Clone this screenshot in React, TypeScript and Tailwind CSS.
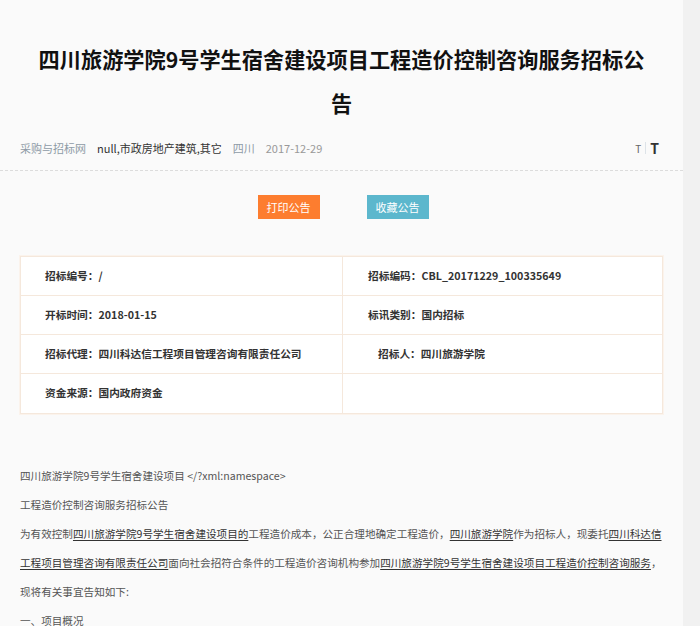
import React from 'react';

const FONT = { fontFamily: '"Microsoft YaHei", "Noto Sans CJK SC", "Noto Sans", sans-serif' };

const rows: [string, string, string, string, boolean?][] = [
  ['招标编号', '/', '招标编码', 'CBL_20171229_100335649'],
  ['开标时间', '2018-01-15', '标讯类别', '国内招标'],
  ['招标代理', '四川科达信工程项目管理咨询有限责任公司', '招标人', '四川旅游学院', true],
  ['资金来源', '国内政府资金', '', ''],
];

function U({ children }: { children: React.ReactNode }) {
  return <span className="underline underline-offset-2 text-[#333]">{children}</span>;
}

export default function App() {
  return (
    <div className="flex w-[700px] h-[626px] overflow-hidden bg-[#f1f1f1]" style={FONT}>
      <div className="w-[683px] shrink-0 bg-[#fafafa]">
        {/* Title */}
        <h1 className="pt-[37px] px-[30px] text-center text-[21.2px] leading-[44px] font-bold text-[#111]">
          四川旅游学院9号学生宿舍建设项目工程造价控制咨询服务招标公告
        </h1>

        {/* Meta */}
        <div className="mt-[13px] pb-[12px] border-b border-dashed border-[#dcdcdc]">
          <div className="flex items-center justify-between h-[20px] px-[20px] text-[11px]">
            <div className="flex items-center gap-[11px]">
              <span className="text-[#8e9aa6]">采购与招标网</span>
              <span className="text-[#333]">null,市政房地产建筑,其它</span>
              <span className="text-[#8e9aa6]">四川</span>
              <span className="text-[#999]">2017-12-29</span>
            </div>
            <div className="flex items-center gap-[4px] pr-[4px]">
              <span className="text-[10px] text-[#666]">T</span>
              <span className="w-px h-[12px] bg-[#dde3e8]" />
              <span className="text-[14px] font-bold text-[#333]">T</span>
            </div>
          </div>
        </div>

        {/* Buttons */}
        <div className="mt-[24px] flex justify-center gap-[47px] pl-[3px]">
          <button className="w-[62px] h-[24px] bg-[#fd7d2f] text-white text-[11px]">打印公告</button>
          <button className="w-[62px] h-[24px] bg-[#5cb7cd] text-white text-[11px]">收藏公告</button>
        </div>

        {/* Info table */}
        <div className="mt-[37px] mx-[20px] bg-white border border-[#f5e8dc] shadow-[0_0_0_1px_#fbf3ec]">
          {rows.map(([k1, v1, k2, v2, indent], i) => (
            <div
              key={i}
              className={`grid grid-cols-[322px_1fr] h-[39px] text-[10.7px] font-semibold text-[#333] ${
                i < rows.length - 1 ? 'border-b border-[#f5e8dc]' : ''
              }`}
            >
              <div className="flex items-center pl-[24px] border-r border-[#f5e8dc]">
                {k1}：{v1}
              </div>
              <div className={`flex items-center ${indent ? 'pl-[35px]' : 'pl-[25px]'}`}>
                {k2 ? `${k2}：${v2}` : ''}
              </div>
            </div>
          ))}
        </div>

        {/* Body */}
        <div className="mt-[47px] px-[20px] text-[10.6px] leading-[29px] text-[#555]">
          <p>四川旅游学院9号学生宿舍建设项目 &lt;/?xml:namespace&gt;</p>
          <p>工程造价控制咨询服务招标公告</p>
          <p>
            为有效控制<U>四川旅游学院9号学生宿舍建设项目的</U>工程造价成本，公正合理地确定工程造价，<U>四川旅游学院</U>作为招标人，现委托<U>四川科达信工程项目管理咨询有限责任公司</U>面向社会招符合条件的工程造价咨询机构参加<U>四川旅游学院9号学生宿舍建设项目工程造价控制咨询服务</U>，
          </p>
          <p>现将有关事宜告知如下:</p>
          <p>一、项目概况</p>
        </div>
      </div>
    </div>
  );
}
